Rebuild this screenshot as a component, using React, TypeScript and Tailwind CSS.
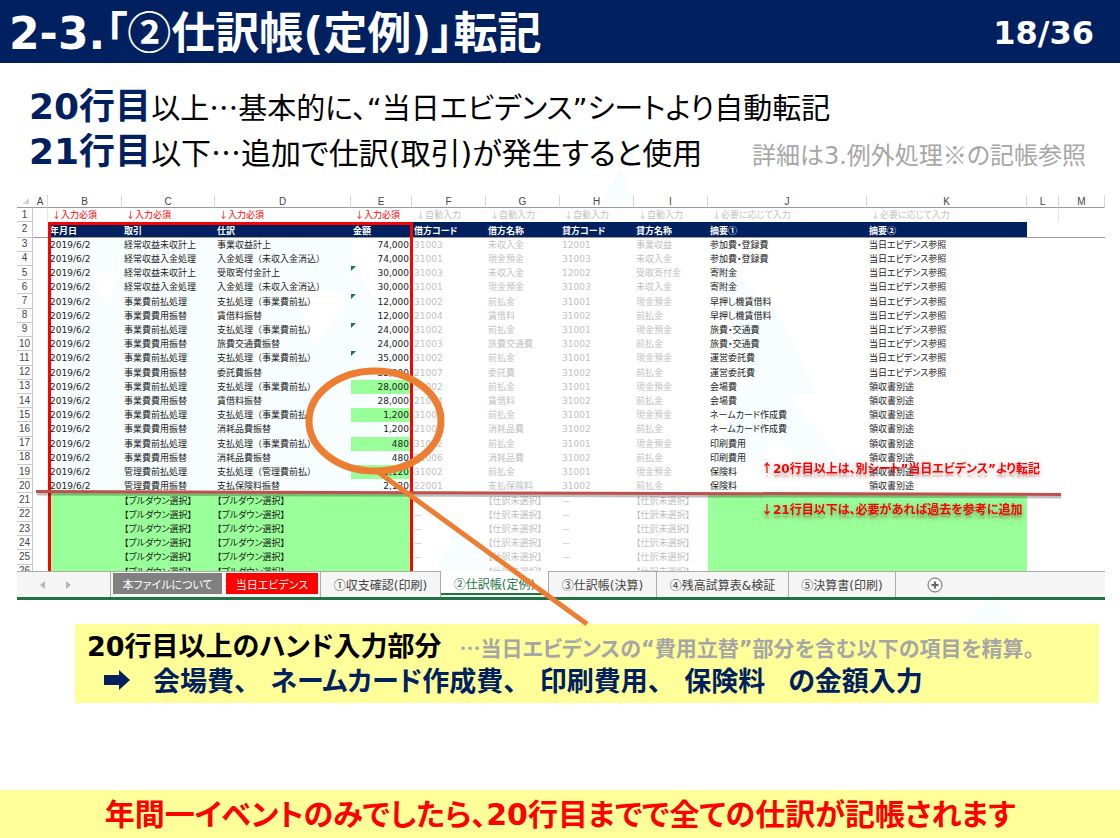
import { Fragment } from 'react'
import clsx from 'clsx'

interface Row {
  no: number
  cells: string[]
  // 手入力セル（緑）
  input?: boolean
  // セル左上の緑マーク
  mark?: boolean
}

const COLUMNS = [
  { name: 'A', width: 'w-[15px]' },
  { name: 'B', width: 'w-[74px]' },
  { name: 'C', width: 'w-[93px]' },
  { name: 'D', width: 'w-[136px]' },
  { name: 'E', width: 'w-[61px]' },
  { name: 'F', width: 'w-[74px]' },
  { name: 'G', width: 'w-[74px]' },
  { name: 'H', width: 'w-[74px]' },
  { name: 'I', width: 'w-[74px]' },
  { name: 'J', width: 'w-[159px]' },
  { name: 'K', width: 'w-[160px]' },
  { name: 'L', width: 'w-[32px]' },
  { name: 'M', width: '' },
]

const HINTS = ['↓入力必須', '↓入力必須', '↓入力必須', '↓入力必須', '↓自動入力', '↓自動入力', '↓自動入力', '↓自動入力', '↓必要に応じて入力', '↓必要に応じて入力']
const HEADS = ['年月日', '取引', '仕訳', '金額', '借方コード', '借方名称', '貸方コード', '貸方名称', '摘要①', '摘要②']

const DATE = '2019/6/2'
const EVI = '当日エビデンス参照'
const RECEIPT = '領収書別途'

const ROWS: Row[] = [
  { no: 3, cells: [DATE, '経常収益未収計上', '事業収益計上', '74,000', '31003', '未収入金', '12001', '事業収益', '参加費・登録費', EVI] },
  { no: 4, cells: [DATE, '経常収益入金処理', '入金処理（未収入金消込）', '74,000', '31001', '現金預金', '31003', '未収入金', '参加費・登録費', EVI] },
  { no: 5, mark: true, cells: [DATE, '経常収益未収計上', '受取寄付金計上', '30,000', '31003', '未収入金', '12002', '受取寄付金', '寄附金', EVI] },
  { no: 6, cells: [DATE, '経常収益入金処理', '入金処理（未収入金消込）', '30,000', '31001', '現金預金', '31003', '未収入金', '寄附金', EVI] },
  { no: 7, mark: true, cells: [DATE, '事業費前払処理', '支払処理（事業費前払）', '12,000', '31002', '前払金', '31001', '現金預金', '早押し機賃借料', EVI] },
  { no: 8, cells: [DATE, '事業費費用振替', '賃借料振替', '12,000', '21004', '賃借料', '31002', '前払金', '早押し機賃借料', EVI] },
  { no: 9, mark: true, cells: [DATE, '事業費前払処理', '支払処理（事業費前払）', '24,000', '31002', '前払金', '31001', '現金預金', '旅費・交通費', EVI] },
  { no: 10, cells: [DATE, '事業費費用振替', '旅費交通費振替', '24,000', '21003', '旅費交通費', '31002', '前払金', '旅費・交通費', EVI] },
  { no: 11, mark: true, cells: [DATE, '事業費前払処理', '支払処理（事業費前払）', '35,000', '31002', '前払金', '31001', '現金預金', '運営委託費', EVI] },
  { no: 12, cells: [DATE, '事業費費用振替', '委託費振替', '35,000', '21007', '委託費', '31002', '前払金', '運営委託費', EVI] },
  { no: 13, input: true, cells: [DATE, '事業費前払処理', '支払処理（事業費前払）', '28,000', '31002', '前払金', '31001', '現金預金', '会場費', RECEIPT] },
  { no: 14, cells: [DATE, '事業費費用振替', '賃借料振替', '28,000', '21004', '賃借料', '31002', '前払金', '会場費', RECEIPT] },
  { no: 15, input: true, cells: [DATE, '事業費前払処理', '支払処理（事業費前払）', '1,200', '31002', '前払金', '31001', '現金預金', 'ネームカード作成費', RECEIPT] },
  { no: 16, cells: [DATE, '事業費費用振替', '消耗品費振替', '1,200', '21006', '消耗品費', '31002', '前払金', 'ネームカード作成費', RECEIPT] },
  { no: 17, input: true, cells: [DATE, '事業費前払処理', '支払処理（事業費前払）', '480', '31002', '前払金', '31001', '現金預金', '印刷費用', RECEIPT] },
  { no: 18, cells: [DATE, '事業費費用振替', '消耗品費振替', '480', '21006', '消耗品費', '31002', '前払金', '印刷費用', RECEIPT] },
  { no: 19, input: true, cells: [DATE, '管理費前払処理', '支払処理（管理費前払）', '2,120', '31002', '前払金', '31001', '現金預金', '保険料', RECEIPT] },
  { no: 20, cells: [DATE, '管理費費用振替', '支払保険料振替', '2,120', '22001', '支払保険料', '31002', '前払金', '保険料', RECEIPT] },
  ...[21, 22, 23, 24, 25, 26].map(no => ({
    no,
    cells: ['', '【プルダウン選択】', '【プルダウン選択】', '', '—', '【仕訳未選択】', '—', '【仕訳未選択】', '', ''],
  })),
]

// 英数字だけ欧文フォントで表示する
function Mixed({ text }: { text: string }) {
  return (
    <>
      {text.split(/([\x21-\x7e“”]+)/).map((part, i) =>
        i % 2 ? (
          <span key={i} className="font-['DejaVu_Sans','Noto_Sans_CJK_JP',sans-serif] leading-none">{part}</span>
        ) : (
          <Fragment key={i}>{part}</Fragment>
        )
      )}
    </>
  )
}

function cellClass(row: Row, col: number) {
  const blank = row.no > 20
  return clsx(
    'relative p-0 whitespace-nowrap',
    !row.cells[col].includes('（') && '[font-feature-settings:"palt"]',
    col === 3 ? 'pr-[3px] text-right' : 'pl-[2px]',
    col >= 4 && col <= 7 ? 'text-[#bfbfbf]' : 'text-[#222222]',
    (blank ? col <= 3 || col >= 8 : col === 3 && row.input) && 'bg-[#99ff99]'
  )
}

function RowNo({ no }: { no: number }) {
  return (
    <th scope="row" className="border-r border-b border-[#c8c8c8] p-0 text-center font-['Liberation_Sans',sans-serif] text-[10px] font-normal text-[#444444]">
      {no}
    </th>
  )
}

function SheetTable() {
  return (
    <table className="relative h-[384px] w-full table-fixed border-separate border-spacing-0 text-left text-[9px] leading-[12px]">
      <colgroup>
        <col className="w-[16px]" />
        {COLUMNS.map(c => <col key={c.name} className={c.width} />)}
      </colgroup>
      <thead>
        <tr className="font-['Liberation_Sans',sans-serif] text-[10px] leading-[10px] text-[#444444]">
          <th className="border-b border-[#9b9b9b] p-0">
            <svg viewBox="0 0 6 6" className="ml-auto mr-1 h-[6px] w-[6px]" aria-hidden="true">
              <path d="M6 0v6H0z" fill="#d0d0d0" />
            </svg>
          </th>
          {COLUMNS.map(c => (
            <th key={c.name} scope="col" className="border-r border-b border-r-[#d8d8d8] border-b-[#9b9b9b] p-0 pt-[2px] text-center font-normal">
              {c.name}
            </th>
          ))}
        </tr>
      </thead>
      <tbody>
        <tr>
          <RowNo no={1} />
          <td className="border-r border-[#e4e4e4] p-0" />
          {HINTS.map((h, i) => (
            <td key={i} className={clsx('p-0 pl-1 whitespace-nowrap [font-feature-settings:"palt"]', i < 4 ? 'text-[#ff0000]' : 'text-[#bfbfbf]')}>
              {h}
            </td>
          ))}
          <td className="border-r border-[#e4e4e4] p-0" />
          <td className="p-0" />
        </tr>
        <tr>
          <RowNo no={2} />
          <td className="border-b border-[#9b9b9b] p-0" />
          {HEADS.map((h, i) => (
            <td key={i} className="border-b border-[#9b9b9b] bg-[#002060] p-0 pt-[3px] pl-[2px] leading-[10px] font-bold whitespace-nowrap text-white [font-feature-settings:'palt']">
              {h}
            </td>
          ))}
          <td className="border-b border-[#9b9b9b] p-0" />
          <td className="border-b border-[#9b9b9b] p-0" />
        </tr>
        {ROWS.map(row => (
          <tr key={row.no}>
            <RowNo no={row.no} />
            <td className="p-0" />
            {row.cells.map((text, col) => (
              <td key={col} className={cellClass(row, col)}>
                {col === 3 && row.mark && (
                  <svg viewBox="0 0 5 5" className="absolute top-0 left-0 h-[5px] w-[5px]" aria-hidden="true">
                    <path d="M0 0h5L0 5z" fill="#1e7145" />
                  </svg>
                )}
                <Mixed text={text} />
              </td>
            ))}
            <td className="p-0" />
            <td className="p-0" />
          </tr>
        ))}
      </tbody>
    </table>
  )
}

// 背景の薄い透かし
function Watermark() {
  return (
    <svg className="pointer-events-none absolute top-0 left-0 h-[440px] w-full overflow-visible" aria-hidden="true">
      <g fill="#f8feff">
        <path d="M604 -28 L583 8 H619z" />
        <path d="M31 44H334V300H31z" />
        <path d="M338 70 L372 130 L392 210 V300H334V80z" />
        <path d="M690 46 L762 120 L800 200 H736z" />
        <path d="M742 165 L830 270 H784 L756 236 L740 270 H690z" />
        <path d="M438 340 L418 376 H482z" />
        <path d="M973 404 L948 428 H1003z" />
      </g>
      <g fill="#ffffff">
        <path d="M76 78 L90 110 L104 78z" />
        <path d="M212 80 L196 120 L226 170 L240 130z" />
        <path d="M270 90 L300 150 L332 100z" />
      </g>
    </svg>
  )
}

function Annotations() {
  return (
    <>
      <svg className="pointer-events-none absolute top-0 left-0 h-[440px] w-full overflow-visible" aria-hidden="true">
        <path d="M32.5 376V28.5H394.5V376" fill="none" stroke="#ff0000" strokeWidth="3" />
        <path d="M20 299L1044 302" stroke="#000000" strokeOpacity="0.25" strokeWidth="3" />
        <path d="M19 296.5L1044 299.5" stroke="#c0504d" strokeWidth="3" />
        <ellipse cx="358" cy="226" rx="66" ry="50" fill="none" stroke="#ed7d31" strokeWidth="7" />
        <path d="M361 277L570 429" stroke="#ed7d31" strokeWidth="5" />
      </svg>
      <div className="absolute top-[264px] left-[744px] flex flex-col gap-[23px] text-[12px] leading-[18px] font-bold whitespace-nowrap text-[#ff0000] [font-feature-settings:'palt'] [text-shadow:0_2px_6px_rgba(0,0,0,0.35)]">
        <p className="[-webkit-box-reflect:below_-6px_linear-gradient(transparent_55%,rgba(0,0,0,0.5))]">
          <Mixed text="↑20行目以上は、別シート”当日エビデンス”より転記" />
        </p>
        <p className="[-webkit-box-reflect:below_-6px_linear-gradient(transparent_55%,rgba(0,0,0,0.5))]">
          <Mixed text="↓21行目以下は、必要があれば過去を参考に追加" />
        </p>
      </div>
    </>
  )
}

function SheetTabs() {
  const tab = 'h-full border-r border-[#ababab] text-center whitespace-nowrap'
  return (
    <div className="relative flex h-[29px] border-t border-b-[3px] border-t-[#ababab] border-b-[#217346] bg-[#f5f5f5] text-[12px] leading-[22px] text-[#444444] [font-feature-settings:'palt']">
      <div className="flex w-[94px] items-center gap-[21px] border-r border-[#ababab] pl-[23px]">
        <button type="button" aria-label="前のシート">
          <svg viewBox="0 0 5 8" className="h-[8px] w-[5px]"><path d="M5 0v8L0 4z" fill="#b5b5b5" /></svg>
        </button>
        <button type="button" aria-label="次のシート">
          <svg viewBox="0 0 5 8" className="h-[8px] w-[5px]"><path d="M0 0v8l5-4z" fill="#b5b5b5" /></svg>
        </button>
      </div>
      <div className="flex gap-1 border-r border-[#ababab] px-[2px] pt-px pb-[3px] text-[11px] leading-[20px] text-white">
        <button type="button" className="w-[109px] bg-[#808080]">本ファイルについて</button>
        <button type="button" className="w-[92px] bg-[#ff0000]">当日エビデンス</button>
      </div>
      <button type="button" className={clsx(tab, 'w-[120px]')}><Mixed text="①収支確認(印刷)" /></button>
      <button type="button" className="-mt-px h-[24px] w-[108px] border-r border-b-2 border-r-[#ababab] border-b-[#217346] bg-white pt-[2px] text-center whitespace-nowrap text-[#217346]">
        <Mixed text="②仕訳帳(定例)" />
      </button>
      <button type="button" className={clsx(tab, 'w-[108px]')}><Mixed text="③仕訳帳(決算)" /></button>
      <button type="button" className={clsx(tab, 'w-[132px]')}><Mixed text="④残高試算表&検証" /></button>
      <button type="button" className={clsx(tab, 'w-[107px]')}><Mixed text="⑤決算書(印刷)" /></button>
      <button type="button" aria-label="シートを追加" className="ml-[31px]">
        <svg viewBox="0 0 16 16" className="h-[16px] w-[16px]" fill="none" stroke="#666666">
          <circle cx="8" cy="8" r="7" />
          <path d="M8 4.5v7M4.5 8h7" strokeWidth="2" />
        </svg>
      </button>
    </div>
  )
}

export default function App() {
  return (
    <div lang="ja" className="flex min-h-screen flex-col bg-white font-['Noto_Sans_CJK_JP',sans-serif] text-black">
      <header className="flex h-[63px] items-center justify-between bg-[#002060] pr-[26px] pb-1 pl-[9px] font-bold text-white">
        <h1 className="text-[44px] leading-[58px] whitespace-nowrap [font-feature-settings:'palt']">
          <Mixed text="2-3.「②仕訳帳(定例)」転記" />
        </h1>
        <p className="text-[32px] leading-[58px]"><Mixed text="18/36" /></p>
      </header>

      <main className="flex flex-1 flex-col">
        <section className="pt-[21px] pr-[34px] pl-[29px] leading-[45px] whitespace-nowrap [font-feature-settings:'palt']">
          <p className="text-[29px]">
            <strong className="text-[36px] leading-none text-[#002060]"><Mixed text="20行目" /></strong>
            <Mixed text="以上…基本的に、“当日エビデンス”シートより自動転記" />
          </p>
          <div className="flex items-baseline justify-between">
            <p className="text-[30px]">
              <strong className="text-[36px] leading-none text-[#002060]"><Mixed text="21行目" /></strong>
              <Mixed text="以下…追加で仕訳(取引)が発生すると使用" />
            </p>
            <p className="text-[24px] text-[#a6a6a6]"><Mixed text="詳細は3.例外処理※の記帳参照" /></p>
          </div>
        </section>

        <section className="relative mt-[19px] mr-[15px] ml-[17px]">
          <Watermark />
          <div className="h-[376px] overflow-hidden">
            <SheetTable />
          </div>
          <SheetTabs />
          <Annotations />
        </section>

        <section className="mt-6 mr-[21px] ml-[75px] bg-[#ffff99] px-3 pt-[3px] pb-[6px] text-[27px] leading-[35px] font-bold whitespace-nowrap [font-feature-settings:'palt']">
          <div className="flex h-[35px] items-baseline gap-[18px]">
            <h2><Mixed text="20行目以上のハンド入力部分" /></h2>
            <p className="text-[21px] text-[#a6a6a6]"><Mixed text="…当日エビデンスの“費用立替”部分を含む以下の項目を精算。" /></p>
          </div>
          <div className="flex items-center gap-[23px] pl-[17px] text-[#002060]">
            <svg viewBox="0 0 26 20" className="h-[20px] w-[26px]" fill="#002060" aria-hidden="true">
              <path d="M0 5h15V0l11 10-11 10v-5H0z" />
            </svg>
            <span>会場費、</span>
            <span>ネームカード作成費、</span>
            <span>印刷費用、</span>
            <span>保険料</span>
            <span>の金額入力</span>
          </div>
        </section>
      </main>

      <footer className="bg-[#ffff99] pb-1 text-center text-[30px] leading-[44px] font-bold whitespace-nowrap text-[#ff0000] [font-feature-settings:'palt']">
        <Mixed text="年間一イベントのみでしたら、20行目までで全ての仕訳が記帳されます" />
      </footer>
    </div>
  )
}
